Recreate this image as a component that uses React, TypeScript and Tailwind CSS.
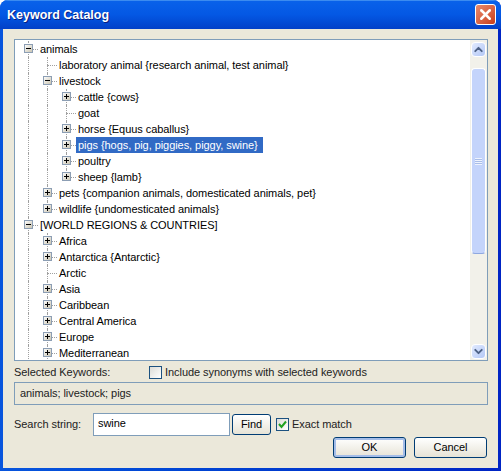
import { ChevronDown, ChevronUp, X } from 'lucide-react';

type NodeKind = 'plus' | 'minus' | 'leaf';

interface TreeRow {
    label: string;
    kind: NodeKind;
    // one entry per ancestor level: does that level's line pass through this row
    guides: boolean[];
    last?: boolean;
    selected?: boolean;
}

const TREE_ROWS: TreeRow[] = [
    { label: 'animals', kind: 'minus', guides: [] },
    { label: 'laboratory animal {research animal, test animal}', kind: 'leaf', guides: [true] },
    { label: 'livestock', kind: 'minus', guides: [true] },
    { label: 'cattle {cows}', kind: 'plus', guides: [true, true] },
    { label: 'goat', kind: 'leaf', guides: [true, true] },
    { label: 'horse {Equus caballus}', kind: 'plus', guides: [true, true] },
    { label: 'pigs {hogs, pig, piggies, piggy, swine}', kind: 'plus', guides: [true, true], selected: true },
    { label: 'poultry', kind: 'plus', guides: [true, true] },
    { label: 'sheep {lamb}', kind: 'plus', guides: [true, true], last: true },
    { label: 'pets {companion animals, domesticated animals, pet}', kind: 'plus', guides: [true] },
    { label: 'wildlife {undomesticated animals}', kind: 'plus', guides: [true], last: true },
    { label: '[WORLD REGIONS & COUNTRIES]', kind: 'minus', guides: [] },
    { label: 'Africa', kind: 'plus', guides: [true] },
    { label: 'Antarctica {Antarctic}', kind: 'plus', guides: [true] },
    { label: 'Arctic', kind: 'leaf', guides: [true] },
    { label: 'Asia', kind: 'plus', guides: [true] },
    { label: 'Caribbean', kind: 'plus', guides: [true] },
    { label: 'Central America', kind: 'plus', guides: [true] },
    { label: 'Europe', kind: 'plus', guides: [true] },
    { label: 'Mediterranean', kind: 'plus', guides: [true] },
];

function Expander({ kind }: { kind: NodeKind }) {
    return (
        <svg width="9" height="9" viewBox="0 0 9 9" className="absolute left-[5px] top-[3px]">
            <defs>
                <linearGradient id="expander" x1="0" y1="0" x2="1" y2="1">
                    <stop offset="0" stopColor="#ffffff" />
                    <stop offset="1" stopColor="#c8c2ae" />
                </linearGradient>
            </defs>
            <rect x="0.5" y="0.5" width="8" height="8" fill="url(#expander)" stroke="#8c9eb4" />
            <path d="M2 4.5H7" stroke="#000" />
            {kind === 'plus' && <path d="M4.5 2V7" stroke="#000" />}
        </svg>
    );
}

function TreeLine({ row }: { row: TreeRow }) {
    return (
        <div className="flex h-4 shrink-0 items-center">
            {row.guides.map((on, i) => (
                <div key={i} className="h-full w-[19px] shrink-0 pl-[9px]">
                    {on && <div className="h-full border-l border-dotted border-[#a0a0a0]" />}
                </div>
            ))}
            <div className="relative h-full w-[19px] shrink-0">
                <div className={`absolute left-[9px] top-0 border-l border-dotted border-[#a0a0a0] ${row.last ? 'h-2' : 'h-full'}`} />
                <div className="absolute left-[9px] top-2 w-2.5 border-t border-dotted border-[#a0a0a0]" />
                {row.kind !== 'leaf' && <Expander kind={row.kind} />}
            </div>
            <span
                className={`h-4 whitespace-nowrap pl-0.5 pr-[5px] leading-4 ${row.selected ? 'bg-[#316ac5] text-white' : 'text-black'}`}
            >
                {row.label}
            </span>
        </div>
    );
}

function ScrollButton({ children }: { children: React.ReactNode }) {
    return (
        <div className="flex h-[15px] w-[15px] shrink-0 items-center justify-center rounded-sm border border-white bg-gradient-to-br from-[#e1eafe] to-[#b4c8f6] text-[#4d6185]">
            {children}
        </div>
    );
}

function Scrollbar() {
    return (
        <div className="flex h-full w-[17px] shrink-0 flex-col items-center bg-[#f2f1ea] pt-0.5 pb-px">
            <ScrollButton>
                <ChevronUp size={13} strokeWidth={3.5} />
            </ScrollButton>
            <div className="mt-[11px] flex h-[186px] w-[15px] items-center justify-center rounded-sm border border-white border-b-[#8fa8e0] bg-[#c4d4fb]">
                <div className="h-[7px] w-[7px] bg-[repeating-linear-gradient(to_bottom,#eef3fe_0,#eef3fe_1px,#a9bde8_1px,#a9bde8_2px)]" />
            </div>
            <div className="flex-1" />
            <ScrollButton>
                <ChevronDown size={13} strokeWidth={3.5} />
            </ScrollButton>
        </div>
    );
}

function XpButton({ label, width, isDefault }: { label: string; width: string; isDefault?: boolean }) {
    return (
        <button
            className={`${width} h-[21px] rounded-[3px] border border-[#003c74] bg-gradient-to-b from-white to-[#e6e3d6] text-center leading-none text-black ${
                isDefault ? 'shadow-[inset_0_0_0_2px_#a4bde8]' : ''
            }`}
        >
            {label}
        </button>
    );
}

export default function App() {
    return (
        <div className="h-[471px] w-[501px] overflow-hidden bg-white font-['Liberation_Sans',sans-serif] text-[11px] tracking-[-0.06px]">
            <div className="flex h-full flex-col overflow-hidden rounded-t-lg bg-gradient-to-r from-[#0855dd] to-[#0024c4]">
                {/* Title bar */}
                <div className="flex h-[29px] shrink-0 items-center justify-between bg-gradient-to-b from-[#0a62ea] via-[#0458e4] to-[#0340c8] pl-[7px] pr-[5px] shadow-[inset_0_1px_#3b8bf0]">
                    <span className="pt-0.5 text-[12.5px] font-bold tracking-normal text-white [text-shadow:1px_1px_#0a1f80]">Keyword Catalog</span>
                    <div className="flex h-[21px] w-[21px] items-center justify-center rounded-[3px] border border-white bg-gradient-to-br from-[#e88a6e] to-[#c93c14] text-white">
                        <X size={17} strokeWidth={3.5} />
                    </div>
                </div>

                {/* Dialog body */}
                <div className="mx-[3px] mb-[3px] flex min-h-0 flex-1 flex-col bg-[#ebe8da] px-[11px] pt-2.5">
                    <div className="flex h-[322px] w-[474px] shrink-0 overflow-hidden border border-[#7f9db9] bg-white">
                        <div className="min-w-0 flex-1 overflow-hidden pl-1 pt-px">
                            {TREE_ROWS.map((row) => (
                                <TreeLine key={row.label} row={row} />
                            ))}
                        </div>
                        <Scrollbar />
                    </div>

                    <div className="mt-[3px] flex h-[17px] items-center">
                        <span className="w-[135px] text-[#222]">Selected Keywords:</span>
                        <span className="h-[13px] w-[13px] border border-[#1c5180] bg-gradient-to-br from-[#dcdcd7] to-white" />
                        <span className="ml-[3px] text-[#222]">Include synonyms with selected keywords</span>
                    </div>

                    <div className="mt-px flex h-[23px] w-[474px] items-center border border-[#7f9db9] pb-px pl-[5px] text-[#222]">
                        animals; livestock; pigs
                    </div>

                    <div className="mt-[7px] flex h-[24px] items-center">
                        <span className="w-[79px] text-[#222]">Search string:</span>
                        <div className="flex h-[23px] w-[137px] items-center border border-[#7f9db9] bg-white pb-px pl-1 text-black">
                            swine
                        </div>
                        <div className="ml-0.5">
                            <XpButton label="Find" width="w-[39px]" />
                        </div>
                        <span className="ml-[5px] flex h-[13px] w-[13px] items-center justify-center border border-[#1c5180] bg-gradient-to-br from-[#dcdcd7] to-white">
                            <svg width="9" height="9" viewBox="0 0 9 9">
                                <path d="M1 4L3.5 7L8 1.5" fill="none" stroke="#21a121" strokeWidth="2" />
                            </svg>
                        </span>
                        <span className="ml-[3px] text-[#222]">Exact match</span>
                    </div>

                    <div className="mt-px flex justify-end gap-2">
                        <XpButton label="OK" width="w-[73px]" isDefault />
                        <XpButton label="Cancel" width="w-[73px]" />
                    </div>
                </div>
            </div>
        </div>
    );
}
